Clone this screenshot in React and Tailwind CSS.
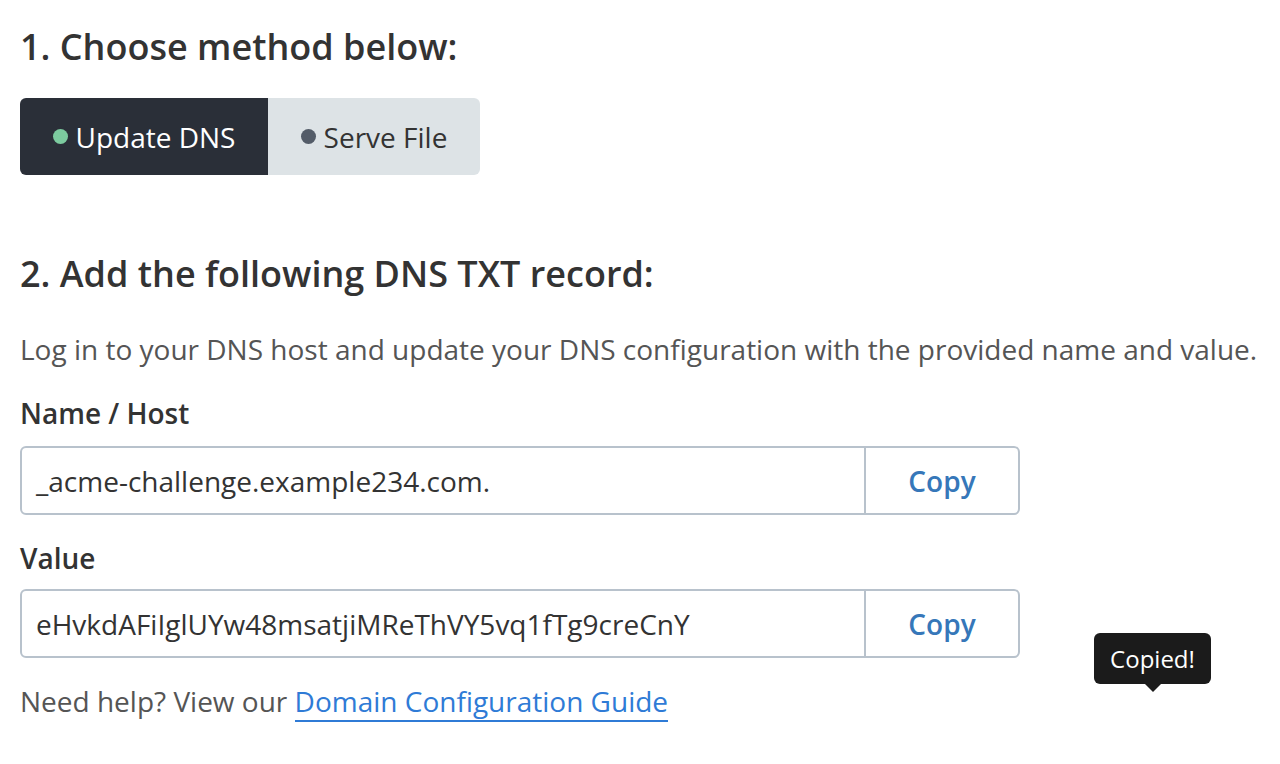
const CopyField = ({ value }) => (
  <div className="flex h-[69px] w-[1000px] rounded-md border-2 border-[#b8c2cc] bg-white">
    <div className="flex flex-1 items-center px-[14px] text-[28px] text-[#333]">
      {value}
    </div>
    <button className="w-[154px] border-l-2 border-[#b8c2cc] text-[28px] font-semibold text-[#3677b9]">
      Copy
    </button>
  </div>
);

export default function App() {
  return (
    <div
      className="relative min-h-[764px] bg-white px-5 text-[#333]"
      style={{ fontFamily: '"Open Sans", sans-serif' }}
    >
      <h1 className="pt-[26px] text-[36px] font-semibold leading-[42px] text-[#333]">
        1. Choose method below:
      </h1>

      <div className="mt-[30px] flex h-[77px] w-[460px] overflow-hidden rounded-md">
        <button className="flex w-[248px] items-center justify-center gap-2 bg-[#2a2f38] text-[28px] text-white">
          <span className="h-[15px] w-[15px] rounded-full bg-[#7ccb9f]" />
          Update DNS
        </button>
        <button className="flex flex-1 items-center justify-center gap-2 bg-[#dde3e6] text-[28px] text-[#333]">
          <span className="h-[15px] w-[15px] rounded-full bg-[#535c68]" />
          Serve File
        </button>
      </div>

      <h2 className="mt-[78px] text-[36px] font-semibold leading-[42px]">
        2. Add the following DNS TXT record:
      </h2>

      <p className="mt-[36px] text-[28px] leading-[36px] text-[#555]">
        Log in to your DNS host and update your DNS configuration with the provided name and value.
      </p>

      <div className="mt-[28px] text-[28px] font-semibold leading-[36px]">Name / Host</div>
      <div className="mt-[15px]">
        <CopyField value="_acme-challenge.example234.com." />
      </div>

      <div className="mt-[25px] text-[28px] font-semibold leading-[36px]">Value</div>
      <div className="mt-[13px]">
        <CopyField value="eHvkdAFiIglUYw48msatjiMReThVY5vq1fTg9creCnY" />
      </div>

      <p className="mt-[25px] text-[28px] leading-[36px] text-[#555]">
        Need help? View our{" "}
        <a className="border-b-2 border-[#2f7bd6] text-[#2f7bd6]" href="#">
          Domain Configuration Guide
        </a>
      </p>

      <div className="absolute left-[1094px] top-[633px] flex h-[51px] w-[117px] items-center justify-center rounded-md bg-[#1b1b1b] text-[24px] text-white">
        Copied!
        <span className="absolute left-1/2 top-full -translate-x-1/2 border-x-[8px] border-t-[8px] border-x-transparent border-t-[#1b1b1b]" />
      </div>
    </div>
  );
}
